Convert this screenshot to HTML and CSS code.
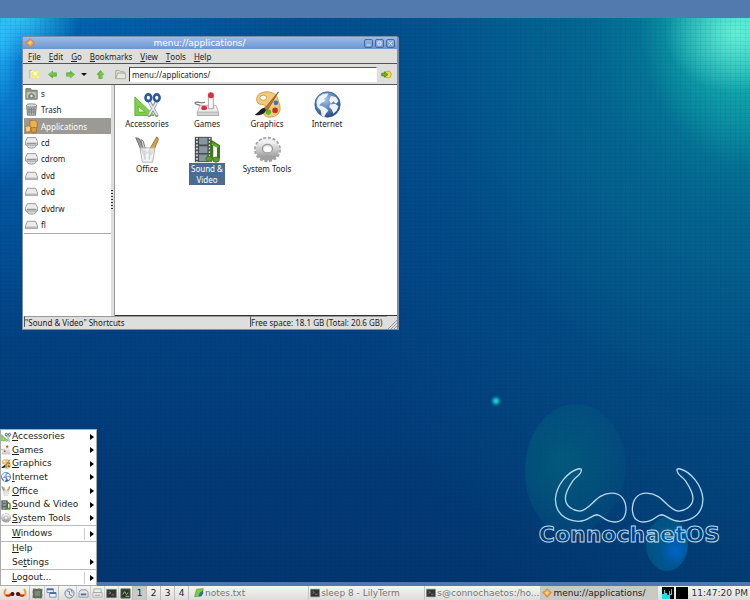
FILE: index.html
```
<!DOCTYPE html>
<html lang="en">

<head>
  <meta charset="utf-8" />
  <meta name="viewport" content="width=device-width, initial-scale=1.0" />
  <title>ConnochaetOS</title>
  <link rel="stylesheet" href="styles.css">
</head>

<body>
  <!-- icon definitions -->
  <svg class="defs" aria-hidden="true">
    <defs>
      <linearGradient id="metal" x1="0" y1="0" x2="0" y2="1">
        <stop offset="0" stop-color="#f0f0f0" />
        <stop offset="1" stop-color="#a0a0a0" />
      </linearGradient>
      <radialGradient id="sea" cx=".4" cy=".3" r=".75">
        <stop offset="0" stop-color="#a9c4e6" />
        <stop offset=".5" stop-color="#5a86c0" />
        <stop offset="1" stop-color="#24477e" />
      </radialGradient>
      <linearGradient id="leaf" x1="0" y1="0" x2="0" y2="1">
        <stop offset="0" stop-color="#9be064" />
        <stop offset="1" stop-color="#4fae22" />
      </linearGradient>
    </defs>
    <symbol id="i-accessories" viewBox="0 0 32 32">
      <path d="M1 7v22h23z" fill="#7ed04a" stroke="#5cb030" />
      <path d="M5 18v7h8z" fill="#e9f7dd" stroke="#5cb030" />
      <path d="M18 12l9 17M27 12l-9 17" stroke="#8f979c" stroke-width="4" stroke-linecap="round" />
      <path d="M18 13l9 15M27 13l-9 15" stroke="#e6eaec" stroke-width="2" stroke-linecap="round" />
      <ellipse cx="17" cy="8" rx="3.4" ry="4" fill="#fff" stroke="#2c56a0" stroke-width="3" />
      <ellipse cx="27" cy="8" rx="3.4" ry="4" fill="#fff" stroke="#2c56a0" stroke-width="3" />
    </symbol>
    <symbol id="i-games" viewBox="0 0 32 32">
      <path d="M13 13c-5 3-9-2-12 1 0 3 6 1 9 5" fill="none" stroke="#777" stroke-width="1.4" />
      <path d="M7 17h19l3 8v4H4v-4z" fill="#eee" stroke="#aaa" />
      <path d="M4 25h25v4H4z" fill="#d4d4d4" stroke="#aaa" />
      <path d="M17 6h6v15h-6z" fill="#f6f6f6" stroke="#999" />
      <circle cx="20" cy="5" r="3.5" fill="#d8313c" />
      <ellipse cx="12" cy="20" rx="3.5" ry="2.6" fill="#d8313c" />
    </symbol>
    <symbol id="i-graphics" viewBox="0 0 32 32">
      <path d="M7 3C14-1 27 1 28 9c1 5 3 6 3 12 0 7-7 10-13 10-5 0-8-4-6-8 2-5 2-7-3-7-7 0-8-9-2-13z" fill="#f0cb7c" stroke="#c8983c" />
      <ellipse cx="11" cy="8" rx="4" ry="3" fill="#fff" stroke="#c8983c" />
      <circle cx="17" cy="25" r="3.3" fill="#5cb82b" />
      <circle cx="25" cy="23" r="3.3" fill="#d42a22" />
      <circle cx="26" cy="14" r="2.8" fill="#3f74b5" />
      <path d="M29 1L14 19l-4 3 2 2 5-3z" fill="#bd7b34" stroke="#79491a" stroke-width=".8" />
      <path d="M12 20c-4 0-5 4-11 8 6 2 13-1 13-6z" fill="#222" />
    </symbol>
    <symbol id="i-internet" viewBox="0 0 32 32">
      <circle cx="16" cy="16" r="15" fill="url(#sea)" stroke="#3c608f" />
      <path d="M5 8c3-4 8-5 12-5l-2 4-3 2 1 3-4 2-3 3 4 1 4 2 3 3-3 4-2 4-3-2-1-6-4-4-1-6z" fill="#eef3f8" />
      <path d="M20 6l6 1 3 5-3 3-3-3-3 3-2-4zM19 16l6-1 4 3-2 5-4 4-2-5-3-3z" fill="#eef3f8" />
    </symbol>
    <symbol id="i-office" viewBox="0 0 32 32">
      <path d="M2 2l4 1 9 17-4 2z" fill="#9b9b9b" stroke="#666" />
      <path d="M8 4l3 2 4 15-3 1z" fill="#d2d2d2" stroke="#777" />
      <path d="M27 1l2 3-8 18-5-2z" fill="#e0a343" stroke="#8b6528" />
      <path d="M7 14h18l-3 17H10z" fill="#f1f3f5" fill-opacity=".8" stroke="#a8a8a8" />
      <path d="M12 17l1 11M19 17l-1 11" stroke="#cfd3d6" stroke-width="2" />
    </symbol>
    <symbol id="i-media" viewBox="0 0 32 32">
      <path d="M1 1h20v30H1z" fill="#474b4c" />
      <path d="M6 2h10v8H6zM6 12h10v8H6zM6 22h10v8H6z" fill="#8796a0" />
      <path d="M3.500 2v29M18.500 2v29" stroke="#e4e6e6" stroke-width="2" stroke-dasharray="2 2" />
      <path d="M21 27V7l8 5v15" fill="none" stroke="#3d7718" stroke-width="3.600" />
      <path d="M21 9l8 4" stroke="#66a936" stroke-width="3" />
      <ellipse cx="18" cy="27" rx="4" ry="3" fill="#5a9d2b" stroke="#3d7718" />
      <ellipse cx="26" cy="28" rx="4" ry="3" fill="#5a9d2b" stroke="#3d7718" />
    </symbol>
    <symbol id="i-system" viewBox="0 0 32 32">
      <ellipse cx="16" cy="16" rx="14" ry="13" fill="none" stroke="#a2a2a2" stroke-width="4" stroke-dasharray="3.500 1.800" />
      <ellipse cx="16" cy="16" rx="9.500" ry="8.500" fill="none" stroke="url(#metal)" stroke-width="9" />
      <ellipse cx="16" cy="15" rx="6" ry="5" fill="none" stroke="#999" stroke-width="1.400" />
    </symbol>
    <symbol id="i-home" viewBox="0 0 16 16">
      <path d="M1 2h6l1 2h7v11H1z" fill="#8b9485" stroke="#666d62" />
      <path d="M2 6h12v8H2z" fill="#bcc3b6" />
      <path d="M4 10l4-3 4 3v4H4z" fill="#7b8476" />
      <circle cx="8" cy="11" r="1.500" fill="#e8ece5" />
    </symbol>
    <symbol id="i-trash" viewBox="0 0 16 16">
      <path d="M2 3h12l-1 12H3z" fill="#b4b8b9" stroke="#6d7273" />
      <ellipse cx="8" cy="3" rx="6.500" ry="2" fill="#dfe2e3" stroke="#6d7273" />
      <path d="M5 6v8M8 6v8M11 6v8M3 8h10M3 11h10" stroke="#737879" />
    </symbol>
    <symbol id="i-apps" viewBox="0 0 16 16">
      <path d="M6 1l6-1 3 3v6l-5 2-4-3z" fill="#eeb055" stroke="#a96d1c" />
      <path d="M0 8l5-1 2 2v5l-6 1z" fill="#f6cb80" stroke="#a96d1c" />
      <path d="M7 10l5-1 2 2v4H8z" fill="#e49a35" stroke="#a96d1c" />
    </symbol>
    <symbol id="i-drive" viewBox="0 0 16 16">
      <path d="M3 4h10l2.500 6v3H.5v-3z" fill="#ececec" stroke="#888" />
      <path d="M1 10.500h14v2.500H1z" fill="#b8b8b8" />
    </symbol>
    <symbol id="i-disc" viewBox="0 0 16 16">
      <ellipse cx="8" cy="11" rx="6" ry="4" fill="#dadada" stroke="#888" />
      <path d="M3 2h10l2.500 5v4H.5V7z" fill="#ececec" stroke="#888" />
      <path d="M2 9h12" stroke="#666" />
    </symbol>
    <symbol id="i-rox" viewBox="0 0 16 16">
      <path d="M8 1l3 3 4 3-3 4-4 4-3-4-4-4 4-2z" fill="#f0a548" stroke="#b97829" />
      <path d="M8 4l3 3-3 4-3-3z" fill="#ffd08a" />
    </symbol>
    <symbol id="i-new" viewBox="0 0 16 16">
      <path d="M1 14V2h3" fill="none" stroke="#aaa" />
      <path d="M3 3h11v10H3z" fill="#f7f7e8" />
      <path d="M9 0l2 4 4-1-1 4 2 3-4 1-2 4-3-3-4 1 1-4-2-3 4-2z" fill="#f3ec5c" />
      <circle cx="9" cy="7" r="3" fill="#fffde0" />
    </symbol>
    <symbol id="i-arrow" viewBox="0 0 16 16">
      <path d="M1 8l7-6v3h7v6H8v3z" fill="url(#leaf)" stroke="#4c9a26" />
    </symbol>
    <symbol id="i-folder" viewBox="0 0 16 16">
      <path d="M1 14V2h5l2 2h5v2" fill="#dddccb" stroke="#98988a" />
      <path d="M1 14l3-8h11v8z" fill="#e8e8dc" stroke="#98988a" />
    </symbol>
    <symbol id="i-go" viewBox="0 0 16 16">
      <circle cx="10" cy="8" r="5" fill="#eedb4c" stroke="#b29b21" />
      <path d="M1 6h4V4l5 4-5 4v-2H1z" fill="#62b42f" stroke="#3b8017" />
    </symbol>
    <symbol id="i-term" viewBox="0 0 16 16">
      <path d="M1 2h14v12H1z" fill="#333" stroke="#777" />
      <path d="M4 5l3 2-3 2M8 10h4" fill="none" stroke="#aaa" />
    </symbol>
    <symbol id="i-note" viewBox="0 0 16 16">
      <path d="M1 14L4 2l11-1-3 11z" fill="#79ce43" stroke="#4c9f22" />
      <path d="M7 14l2-6 5-4 1 4-3 5z" fill="#2d6f9a" />
    </symbol>
  </svg>

  <div class="topbar"></div>

  <main class="desktop">
    <div class="flare flare-large"></div>
    <div class="flare flare-small"></div>
    <div class="spark"></div>

    <div class="brand">
      <svg class="horns" viewBox="103 234 452 166" aria-hidden="true">
        <g id="horn" fill="none" stroke="#b5d8f0" stroke-width="4" stroke-linejoin="round">
          <path d="M185 238C187 254 170 258 160 272C148 290 138 303 137 325C137 348 158 362 180 364C215 362 225 312 275 310C305 309 320 330 320 360C318 390 300 397 285 397C255 397 250 377 232 375C215 376 205 396 175 395C135 391 106 370 107 327C110 285 145 245 175 237Q182 235 185 238z" />
        </g>
        <use href="#horn" transform="matrix(-1 0 0 1 659 0)" />
      </svg>
      <div class="brand-name">ConnochaetOS</div>
    </div>

    <section class="window">
      <header class="titlebar">
        <svg class="title-icon"><use href="#i-rox" /></svg>
        <h1>menu://applications/</h1>
        <button type="button" aria-label="Minimize"><svg viewBox="0 0 9 9"><path d="M2 6.500h5" /></svg></button>
        <button type="button" aria-label="Maximize"><svg viewBox="0 0 9 9"><path d="M2.500 2.500h4v4h-4z" /></svg></button>
        <button type="button" aria-label="Close"><svg viewBox="0 0 9 9"><path d="M2 2l5 5M7 2l-5 5" /></svg></button>
      </header>

      <nav class="menubar">
        <button type="button"><u>F</u>ile</button>
        <button type="button"><u>E</u>dit</button>
        <button type="button"><u>G</u>o</button>
        <button type="button"><u>B</u>ookmarks</button>
        <button type="button"><u>V</u>iew</button>
        <button type="button"><u>T</u>ools</button>
        <button type="button"><u>H</u>elp</button>
      </nav>

      <div class="toolbar">
        <button type="button" class="tool" aria-label="New"><svg class="big"><use href="#i-new" /></svg></button>
        <button type="button" class="tool" aria-label="Back"><svg><use href="#i-arrow" /></svg></button>
        <button type="button" class="tool" aria-label="Forward"><svg class="right"><use href="#i-arrow" /></svg></button>
        <button type="button" class="tool narrow" aria-label="History"><span class="caret"></span></button>
        <button type="button" class="tool wide" aria-label="Up"><svg class="up"><use href="#i-arrow" /></svg></button>
        <button type="button" class="tool" aria-label="Home"><svg class="big"><use href="#i-folder" /></svg></button>
        <input type="text" class="address" aria-label="Location" value="menu://applications/">
        <button type="button" class="tool go" aria-label="Go"><svg class="big"><use href="#i-go" /></svg></button>
      </div>

      <div class="panes">
        <aside class="places">
          <ul>
            <li><a href="#"><svg><use href="#i-home" /></svg>s</a></li>
            <li><a href="#"><svg><use href="#i-trash" /></svg>Trash</a></li>
            <li><a href="#" class="selected"><svg><use href="#i-apps" /></svg>Applications</a></li>
            <li><a href="#"><svg><use href="#i-disc" /></svg>cd</a></li>
            <li><a href="#"><svg><use href="#i-disc" /></svg>cdrom</a></li>
            <li><a href="#"><svg><use href="#i-drive" /></svg>dvd</a></li>
            <li><a href="#"><svg><use href="#i-drive" /></svg>dvd</a></li>
            <li><a href="#"><svg><use href="#i-disc" /></svg>dvdrw</a></li>
            <li><a href="#"><svg><use href="#i-drive" /></svg>fl</a></li>
          </ul>
        </aside>
        <div class="splitter"></div>
        <div class="files">
          <a href="#" class="file"><svg><use href="#i-accessories" /></svg><span>Accessories</span></a>
          <a href="#" class="file"><svg><use href="#i-games" /></svg><span>Games</span></a>
          <a href="#" class="file"><svg><use href="#i-graphics" /></svg><span>Graphics</span></a>
          <a href="#" class="file"><svg><use href="#i-internet" /></svg><span>Internet</span></a>
          <a href="#" class="file"><svg><use href="#i-office" /></svg><span>Office</span></a>
          <a href="#" class="file selected"><svg><use href="#i-media" /></svg><span>Sound &amp;<br>Video</span></a>
          <a href="#" class="file"><svg><use href="#i-system" /></svg><span>System Tools</span></a>
        </div>
      </div>

      <footer class="status">
        <span class="status-main">"Sound &amp; Video" Shortcuts</span>
        <span class="status-space">Free space: 18.1 GB (Total: 20.6 GB)</span>
        <svg class="grip" viewBox="0 0 10 10"><path d="M1 10l9-9M4 10l6-6M7 10l3-3" stroke="#999" /></svg>
      </footer>
    </section>

    <nav class="startmenu">
      <ul class="group apps">
        <li><button type="button"><svg><use href="#i-accessories" /></svg><span><u>A</u>ccessories</span><i class="more"></i></button></li>
        <li><button type="button"><svg><use href="#i-games" /></svg><span><u>G</u>ames</span><i class="more"></i></button></li>
        <li><button type="button"><svg><use href="#i-graphics" /></svg><span><u>G</u>raphics</span><i class="more"></i></button></li>
        <li><button type="button"><svg><use href="#i-internet" /></svg><span><u>I</u>nternet</span><i class="more"></i></button></li>
        <li><button type="button"><svg><use href="#i-office" /></svg><span><u>O</u>ffice</span><i class="more"></i></button></li>
        <li><button type="button"><svg><use href="#i-media" /></svg><span><u>S</u>ound &amp; Video</span><i class="more"></i></button></li>
        <li><button type="button"><svg><use href="#i-system" /></svg><span><u>S</u>ystem Tools</span><i class="more"></i></button></li>
      </ul>
      <ul class="group">
        <li><button type="button" class="split"><span><u>W</u>indows</span><i class="more"></i></button></li>
      </ul>
      <ul class="group pair">
        <li><button type="button"><span><u>H</u>elp</span></button></li>
        <li><button type="button"><span>Se<u>t</u>tings</span><i class="more"></i></button></li>
      </ul>
      <ul class="group">
        <li><button type="button" class="split"><span><u>L</u>ogout...</span><i class="more"></i></button></li>
      </ul>
    </nav>
  </main>

  <footer class="panel">
    <button type="button" class="start" aria-label="Menu">
      <svg viewBox="0 0 24 10">
        <path d="M3 1C0 5 2 9 6 7l4-2" fill="none" stroke="#e8a02c" stroke-width="2" />
        <path d="M21 1c3 4 1 8-3 6l-4-2" fill="none" stroke="#e8a02c" stroke-width="2" />
        <path d="M3 7c3 2 4 0 6-1M21 7c-3 2-4 0-6-1" fill="none" stroke="#d42020" stroke-width="2" />
        <circle cx="9.500" cy="6" r="2" fill="#4d0d0d" />
        <circle cx="15" cy="6" r="2" fill="#4d0d0d" />
      </svg>
    </button>
    <div class="launchers">
      <button type="button" aria-label="Show desktop"><svg viewBox="0 0 12 12"><path d="M1 1h10v10H1z" fill="#5c6459" stroke="#888" stroke-dasharray="3 2" /><path d="M3 3h6v6H3z" fill="#7b8a74" /></svg></button>
      <button type="button" aria-label="Window list"><svg viewBox="0 0 12 12"><path d="M1 1h7v4H1zM4 5h7v5H4z" fill="#f2f4f7" stroke="#7a8ba6" /><path d="M1 1.500h7M4 5.500h7" stroke="#416aa6" stroke-width="2" /></svg></button>
    </div>
    <div class="launchers">
      <button type="button" aria-label="Browser"><svg viewBox="0 0 12 12"><circle cx="6" cy="6" r="5" fill="#dfe4ec" stroke="#6f7f96" /><path d="M3 3l3 1v3l3 2M8 2l1 3" fill="none" stroke="#6f7f96" /></svg></button>
      <button type="button" aria-label="Mail"><svg viewBox="0 0 12 12"><path d="M3 2h6l2 3v5H1V5z" fill="#e3e5ec" stroke="#8b90a4" /><path d="M3 7h6" stroke="#5e6a8c" stroke-width="2" /></svg></button>
      <button type="button" aria-label="Files"><svg viewBox="0 0 12 12"><path d="M2 1h8v4H2zM1 5h10v5H1z" fill="#eee" stroke="#aaa" /><path d="M3 8h6" stroke="#999" /></svg></button>
      <button type="button" aria-label="Terminal"><svg><use href="#i-term" /></svg></button>
      <button type="button" aria-label="Monitor"><svg viewBox="0 0 12 12"><path d="M1 1h10v10H1z" fill="#2e3a2c" stroke="#666" /><path d="M3 7l2-3 2 3 2-2M6 9h4" fill="none" stroke="#a5c696" /></svg></button>
    </div>
    <div class="pager">
      <button type="button" class="current">1</button>
      <button type="button">2</button>
      <button type="button">3</button>
      <button type="button">4</button>
    </div>
    <div class="tasks">
      <button type="button"><svg><use href="#i-note" /></svg>notes.txt</button>
      <button type="button"><svg><use href="#i-term" /></svg>sleep 8 - LilyTerm</button>
      <button type="button"><svg><use href="#i-term" /></svg>s@connochaetos:/ho...</button>
      <button type="button" class="active"><svg><use href="#i-rox" /></svg>menu://applications/</button>
    </div>
    <svg class="meter" viewBox="0 0 12 12"><path d="M0 0h12v12H0z" fill="#000" /><path d="M0 12V7h2V3h1v3h2V8h2V4h1v3h1V2h1v6H8v4z" fill="#19e0e8" /></svg>
    <svg class="meter" viewBox="0 0 12 12"><path d="M0 0h12v12H0z" fill="#000" /></svg>
    <time class="clock">11:47:20 PM</time>
  </footer>
</body>

</html>
```
FILE: styles.css
```
* {
  box-sizing: border-box;
}

html,
body {
  margin: 0;
  padding: 0;
}

body {
  display: flex;
  flex-direction: column;
  height: 100vh;
  overflow: hidden;
  font-family: "Noto Sans", "DejaVu Sans", sans-serif;
  font-size: 8px;
  line-height: 11px;
  color: #222;
}

button {
  display: flex;
  align-items: center;
  margin: 0;
  padding: 0;
  border: 0;
  background: none;
  color: inherit;
  font: inherit;
  white-space: nowrap;
}

a {
  color: inherit;
  text-decoration: none;
}

ul {
  list-style: none;
  margin: 0;
  padding: 0;
}

svg {
  display: block;
  flex: none;
}

.defs {
  position: absolute;
  width: 0;
  height: 0;
}

.topbar {
  flex: none;
  height: 18px;
  background: #537aaf;
}

/* wallpaper */
.desktop {
  position: relative;
  flex: 1;
  border-bottom: 4px solid #4c79b2;
  background:
    repeating-linear-gradient(0deg, rgba(0, 20, 60, .05) 0 1px, transparent 1px 4px),
    repeating-linear-gradient(90deg, rgba(0, 20, 60, .05) 0 1px, transparent 1px 5px),
    radial-gradient(ellipse 70px 60px at 98% 15px, rgba(130, 255, 225, .7), transparent 100%),
    radial-gradient(ellipse 110px 150px at 100% 0, rgba(40, 225, 205, .85) 0%, rgba(24, 190, 185, .6) 45%, transparent 100%),
    radial-gradient(ellipse 320px 380px at 100% 0, rgba(8, 160, 165, .8), rgba(5, 125, 150, .4) 50%, transparent 100%),
    radial-gradient(ellipse 60px 45px at 20px 0, rgba(60, 210, 255, .8), transparent 100%),
    radial-gradient(ellipse 45px 150px at 0 20px, #22b4fa, rgba(14, 140, 225, .6) 45%, transparent 100%),
    radial-gradient(ellipse 300px 330px at 0 0, rgba(0, 115, 205, .7), transparent 100%),
    radial-gradient(ellipse 420px 600px at 100% 15%, rgba(5, 120, 145, .4), transparent 100%),
    linear-gradient(#01508f, #024485 45%, #023670);
}

.flare {
  position: absolute;
  border-radius: 50%;
}

.flare-large {
  right: 123px;
  bottom: 44px;
  width: 102px;
  height: 134px;
  background: radial-gradient(ellipse at 35% 45%, rgba(2, 125, 125, .4), rgba(2, 108, 128, .3) 45%, rgba(2, 100, 128, .2) 68%, transparent 71%);
}

.flare-small {
  right: 62px;
  bottom: 11px;
  width: 42px;
  height: 54px;
  background: radial-gradient(circle at 70% 62%, rgba(0, 112, 220, .8), rgba(0, 110, 170, .5) 35%, rgba(0, 112, 145, .4) 75%);
}

.spark {
  position: absolute;
  right: 248px;
  bottom: 175px;
  width: 12px;
  height: 12px;
  background: radial-gradient(circle, #1cc8cf 15%, rgba(20, 170, 190, .4) 45%, transparent 70%);
}

.brand {
  position: absolute;
  right: 30px;
  bottom: 35px;
  text-align: center;
}

.horns {
  width: 150px;
  height: 55px;
  margin: 0 auto;
}

.brand-name {
  font: bold 22px/24px "DejaVu Sans", sans-serif;
  color: transparent;
  -webkit-text-stroke: 1px #b5d8f0;
}

/* file manager window */
.window {
  position: absolute;
  left: 22px;
  top: 18px;
  display: flex;
  flex-direction: column;
  width: 377px;
  height: 294px;
  border: 1px solid #7b8ea8;
  border-right-width: 2px;
  border-radius: 3px 3px 0 0;
  background: #dededc;
}

.titlebar {
  display: flex;
  align-items: center;
  gap: 2px;
  height: 12px;
  padding: 0 2px;
  background: linear-gradient(#9cbce8, #6d96d0);
}

.title-icon {
  width: 10px;
  height: 10px;
}

.titlebar h1 {
  flex: 1;
  margin: 0;
  color: #fff;
  font: 9px/12px "DejaVu Sans", sans-serif;
  text-align: center;
}

.titlebar button {
  width: 9px;
  height: 9px;
  border: 1px solid #49699a;
  border-radius: 2px;
}

.titlebar button svg {
  width: 7px;
  height: 7px;
  fill: none;
  stroke: #fff;
}

.menubar {
  display: flex;
  gap: 8px;
  height: 15px;
  padding: 0 5px;
  border-bottom: 1px solid #555;
}

.toolbar {
  display: flex;
  align-items: center;
  height: 21px;
  padding: 0 2px;
  border-bottom: 1px solid #555;
}

.tool {
  justify-content: center;
  width: 18px;
  height: 16px;
}

.tool.narrow {
  width: 10px;
}

.tool.wide {
  width: 22px;
}

.tool svg {
  width: 9px;
  height: 9px;
}

.tool svg.big {
  width: 11px;
  height: 11px;
}

.tool .right {
  transform: rotate(180deg);
}

.tool .up {
  transform: rotate(90deg);
}

.caret {
  border: 3px solid transparent;
  border-top-color: #111;
  border-bottom: 0;
}

.address {
  flex: 1;
  min-width: 0;
  height: 15px;
  margin: 0;
  padding: 0 2px;
  border: 1px solid #fff;
  border-top-color: #555;
  border-left: 1px solid #333;
  background: #fff;
  color: #222;
  font: inherit;
}

.panes {
  display: flex;
  flex: 1;
  min-height: 0;
  background: #fff;
}

.places {
  width: 88px;
  padding-left: 1px;
}

.places ul {
  display: grid;
  grid-auto-rows: 1fr;
  height: 149px;
  border-bottom: 1px solid #aaa;
}

.places a {
  display: flex;
  align-items: center;
  gap: 3px;
  height: 100%;
  padding-left: 1px;
}

.places a.selected {
  background: #9c9a95;
  color: #fff;
}

.places svg {
  width: 13px;
  height: 13px;
}

.splitter {
  display: flex;
  align-items: center;
  width: 4px;
  border-right: 1px solid #999;
  background: #dededc;
}

.splitter::before {
  content: "";
  width: 2px;
  height: 21px;
  background: repeating-linear-gradient(#333 0 1px, transparent 1px 3px);
}

.files {
  display: grid;
  flex: 1;
  grid-template-columns: repeat(auto-fill, 60px);
  grid-auto-rows: 45px;
  padding: 6px 2px;
  border-bottom: 1px solid #333;
}

.file {
  display: flex;
  flex-direction: column;
  align-items: center;
  text-align: center;
}

.file svg {
  width: 27px;
  height: 27px;
}

.file span {
  flex: none;
  padding: 0 2px;
}

.file.selected span {
  background: #4b6c8f;
  color: #fff;
}

.status {
  display: flex;
  height: 13px;
  padding-left: 1px;
}

.status span {
  height: 11px;
  border-top: 1px solid #999;
  border-left: 1px solid #555;
}

.status-main {
  flex: 1;
}

.status-space {
  width: 137px;
}

.grip {
  align-self: flex-end;
  width: 10px;
  height: 10px;
}

/* start menu, hangs over the strip above the taskbar */
.startmenu {
  position: absolute;
  left: 0;
  bottom: -4px;
  width: 97px;
  border: 1px solid #aaa;
  background: #fff;
  font-family: "DejaVu Sans", sans-serif;
  font-size: 9px;
}

.group {
  display: grid;
  grid-auto-rows: 1fr;
  height: 16px;
}

.group + .group {
  border-top: 1px solid #bbb;
}

.group.apps {
  height: 95px;
}

.group.pair {
  height: 28px;
}

.startmenu button {
  width: 100%;
  height: 100%;
  padding: 0 2px 0 0;
}

.startmenu button svg {
  width: 10px;
  height: 10px;
  margin-right: 1px;
}

.startmenu button span {
  flex: 1;
  text-align: left;
}

.startmenu button span:first-child {
  padding-left: 11px;
}

.more {
  border: 3px solid transparent;
  border-left: 4px solid #000;
  border-right: 0;
}

.split .more {
  position: relative;
}

.split .more::before {
  content: "";
  position: absolute;
  left: -10px;
  top: -6px;
  height: 12px;
  border-left: 1px solid #ccc;
}

/* taskbar */
.panel {
  display: flex;
  align-items: center;
  flex: none;
  height: 14px;
  background: linear-gradient(#f6f6f5, #dcdcda);
  font-family: "DejaVu Sans", sans-serif;
  font-size: 9px;
}

.panel button {
  height: 14px;
}

.start {
  width: 30px;
  justify-content: center;
  border-right: 1px solid #bbb;
}

.start svg {
  width: 24px;
  height: 10px;
}

.launchers {
  display: flex;
  border-right: 1px solid #bbb;
}

.launchers button {
  justify-content: center;
  width: 14px;
}

.launchers button + button {
  border-left: 1px solid #ccc;
}

.launchers svg {
  width: 11px;
  height: 11px;
}

.launchers + .launchers {
  padding-left: 3px;
}

.pager {
  display: flex;
}

.pager button {
  justify-content: center;
  width: 14px;
  border-right: 1px solid #bbb;
}

.pager .current {
  background: #c9c9c7;
}

.tasks {
  display: flex;
  flex: 1;
  min-width: 0;
  margin: 0 4px;
}

.tasks button {
  flex: 1 1 0;
  min-width: 0;
  gap: 1px;
  overflow: hidden;
  padding-left: 1px;
  border-right: 1px solid #c4c4c4;
  color: #777;
}

.tasks .active {
  background: #c9c9c6;
  color: #222;
}

.tasks svg {
  width: 10px;
  height: 10px;
}

.meter {
  width: 12px;
  height: 12px;
  margin-right: 2px;
}

.clock {
  padding: 0 2px;
  color: #333;
}
```
